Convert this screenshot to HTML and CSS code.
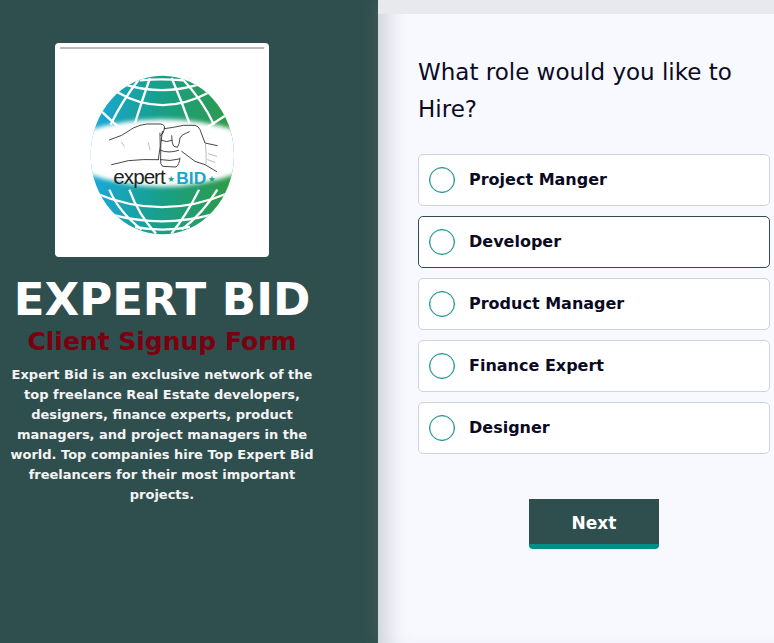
FILE: index.html
```html
<!DOCTYPE html>
<html lang="en">
<head>
  <meta charset="UTF-8" />
  <meta name="viewport" content="width=device-width, initial-scale=1" />
  <title>Expert Bid - Client Signup</title>
  <link rel="stylesheet" href="styles.css">
</head>
<body>

  <div class="page">
    <aside class="sidebar">
      <div class="logo-card">
        <svg class="logo" viewBox="45 40 642 642" role="img" aria-label="Expert Bid logo">
          <defs>
            <linearGradient id="globeFill" x1="0" y1="0" x2="1" y2="0">
              <stop offset="0" stop-color="#1ba8dc" />
              <stop offset="0.45" stop-color="#17a08f" />
              <stop offset="1" stop-color="#2f9a44" />
            </linearGradient>
            <clipPath id="globeClip">
              <ellipse cx="367" cy="376" rx="215" ry="238" />
            </clipPath>
            <filter id="soft" x="-10%" y="-20%" width="120%" height="140%">
              <feGaussianBlur stdDeviation="6" />
            </filter>
          </defs>
          <line class="logo-rule" x1="60" y1="55" x2="672" y2="55" />
          <g clip-path="url(#globeClip)">
            <rect x="150" y="136" width="434" height="480" fill="url(#globeFill)" />
            <g class="grid">
              <!-- meridians, top half -->
              <path d="M330 145 Q305 215 285 280" />
              <path d="M395 145 Q425 215 448 280" />
              <path d="M300 145 Q245 215 212 285" />
              <path d="M425 145 Q490 215 522 285" />
              <!-- meridians, bottom half -->
              <path d="M268 480 Q295 555 348 612" />
              <path d="M477 480 Q440 555 394 612" />
              <path d="M208 480 Q235 545 305 600" />
              <path d="M532 480 Q490 550 425 600" />
              <!-- parallels -->
              <path d="M300 152 Q365 146 430 152" />
              <path d="M255 165 Q365 198 475 165" />
              <path d="M232 188 Q365 265 508 188" />
              <path d="M182 243 Q215 275 245 300 M490 300 Q530 275 578 243" />
              <path d="M165 490 Q367 575 565 490" />
              <path d="M215 555 Q367 595 515 555" />
              <path d="M285 592 Q367 608 450 592" />
            </g>
            <path class="band" filter="url(#soft)" d="M130 306 Q367 232 604 306 L604 428 Q367 515 130 428 Z" />
          </g>
          <g class="fists">
            <path d="M208 331 L245 317 L280 295 Q300 285 320 283 L360 283 Q376 284 373 297 Q372 310 362 318" />
            <path d="M360 310 Q364 350 355 390" />
            <path d="M215 405 L265 393 Q310 388 355 390" />
            <path d="M373 297 L400 293 L430 287 L465 287 Q476 290 480 300 L495 340 L532 348" />
            <path d="M425 365 L465 395 L495 405 L530 426" />
            <path d="M367 305 Q360 345 362 388 Q360 405 368 410 L408 412 Q418 405 420 385" />
            <path d="M364 332 Q380 340 396 332 M362 362 Q385 372 416 362 M362 390 Q390 396 418 388" />
            <path d="M395 318 Q396 345 402 350 L412 353 Q418 345 420 325 Q428 312 436 312 L448 306" />
            <path class="faint" d="M245 338 L253 350 M325 340 L330 360 M496 340 Q500 375 498 404 M505 372 L530 380 M503 390 L525 398" />
          </g>
          <text class="logo-word" x="220" y="462">expert</text>
          <text class="logo-star" x="382" y="458">★</text>
          <text class="logo-bid" x="409" y="463">BID</text>
          <text class="logo-star" x="504" y="458">★</text>
        </svg>
      </div>
      <h1>EXPERT BID</h1>
      <h2>Client Signup Form</h2>
      <p>Expert Bid is an exclusive network of the top freelance Real Estate developers, designers, finance experts, product managers, and project managers in the world. Top companies hire Top Expert Bid freelancers for their most important projects.</p>
    </aside>

    <main class="main">
      <div class="top-band"></div>
      <div class="form">
        <h3>What role would you like to Hire?</h3>
        <div class="options">
          <div class="option"><span class="radio"></span><span class="option-label">Project Manger</span></div>
          <div class="option active"><span class="radio"></span><span class="option-label">Developer</span></div>
          <div class="option"><span class="radio"></span><span class="option-label">Product Manager</span></div>
          <div class="option"><span class="radio"></span><span class="option-label">Finance Expert</span></div>
          <div class="option"><span class="radio"></span><span class="option-label">Designer</span></div>
        </div>
        <div class="actions">
          <button class="next-button">Next</button>
        </div>
      </div>
    </main>
  </div>

</body>
</html>
```

FILE: styles.css
```css
html, body {
  margin: 0;
  padding: 0;
  height: 100%;
  overflow: hidden;
  font-family: "DejaVu Sans", sans-serif;
}
.page {
  display: flex;
  height: 100%;
}
/* Left column */
.sidebar {
  width: 324px;
  flex-shrink: 0;
  padding: 43px 54px 0 0;
  background: #2f4f4f;
  color: white;
  text-align: center;
}
.logo-card {
  width: 214px;
  height: 214px;
  margin-left: 55px;
  background: white;
  border-radius: 4px;
}
.logo {
  display: block;
  width: 214px;
  height: 214px;
}
.logo-rule {
  stroke: #777;
  stroke-width: 3;
}
.grid {
  fill: none;
  stroke: white;
  stroke-width: 7;
}
.band {
  fill: white;
}
.fists {
  fill: none;
  stroke: #222;
  stroke-width: 2.5;
  stroke-linecap: round;
  stroke-linejoin: round;
}
.fists .faint {
  stroke: #999;
  stroke-width: 2;
}
.logo-word {
  font-family: "Liberation Sans", sans-serif;
  font-size: 62px;
  letter-spacing: -3px;
  fill: #222;
}
.logo-bid {
  font-family: "Liberation Sans", sans-serif;
  font-size: 52px;
  font-weight: bold;
  fill: #1ba5c9;
}
.logo-star {
  font-family: "DejaVu Sans", sans-serif;
  font-size: 26px;
  fill: #17a08f;
}
h1 {
  margin: 16px 0 0;
  font-size: 45px;
  line-height: 53px;
  font-weight: bold;
}
h2 {
  margin: 0 0 8px;
  font-size: 25px;
  line-height: 31px;
  font-weight: bold;
  color: #7a0010;
}
.sidebar p {
  margin: 0 auto;
  width: 310px;
  font-size: 13px;
  line-height: 20px;
  font-weight: bold;
  color: #f4f4f4;
}
/* Right column */
.main {
  position: relative;
  flex: 1;
  min-width: 0;
  background: #f8f9ff;
  box-shadow: 0 0 16px rgba(128, 128, 128, 0.3), inset 22px 0 22px -14px rgba(70, 80, 90, 0.25);
}
.top-band {
  height: 14px;
  background: #e7e9ec;
}
.form {
  padding: 40px 4px 0 40px;
}
h3 {
  margin: 0 0 26px;
  font-size: 23px;
  line-height: 37px;
  font-weight: normal;
  color: #0a0a23;
}
.options {
  display: flex;
  flex-direction: column;
  gap: 10px;
}
.option {
  display: flex;
  align-items: center;
  gap: 14px;
  height: 52px;
  box-sizing: border-box;
  padding-left: 10px;
  background: white;
  border: 1px solid #d0d3da;
  border-radius: 5px;
  font-size: 16px;
  font-weight: bold;
  color: #0a0a23;
}
.option.active {
  border-color: #2f4f4f;
}
.option-label {
  margin-bottom: 2px;
}
.radio {
  width: 26px;
  height: 26px;
  box-sizing: border-box;
  border: 1px solid #0e8f8a;
  box-shadow: inset 0 0 0 0.5px rgba(14, 143, 138, 0.5);
  border-radius: 50%;
}
.actions {
  display: flex;
  justify-content: center;
  margin-top: 45px;
}
.next-button {
  width: 130px;
  height: 50px;
  background: #2f4f4f;
  color: white;
  border: none;
  border-bottom: 5px solid #008f88;
  border-radius: 0 0 4px 4px;
  font-family: inherit;
  font-size: 17px;
  font-weight: bold;
  padding: 2px 0 0;
}
```
